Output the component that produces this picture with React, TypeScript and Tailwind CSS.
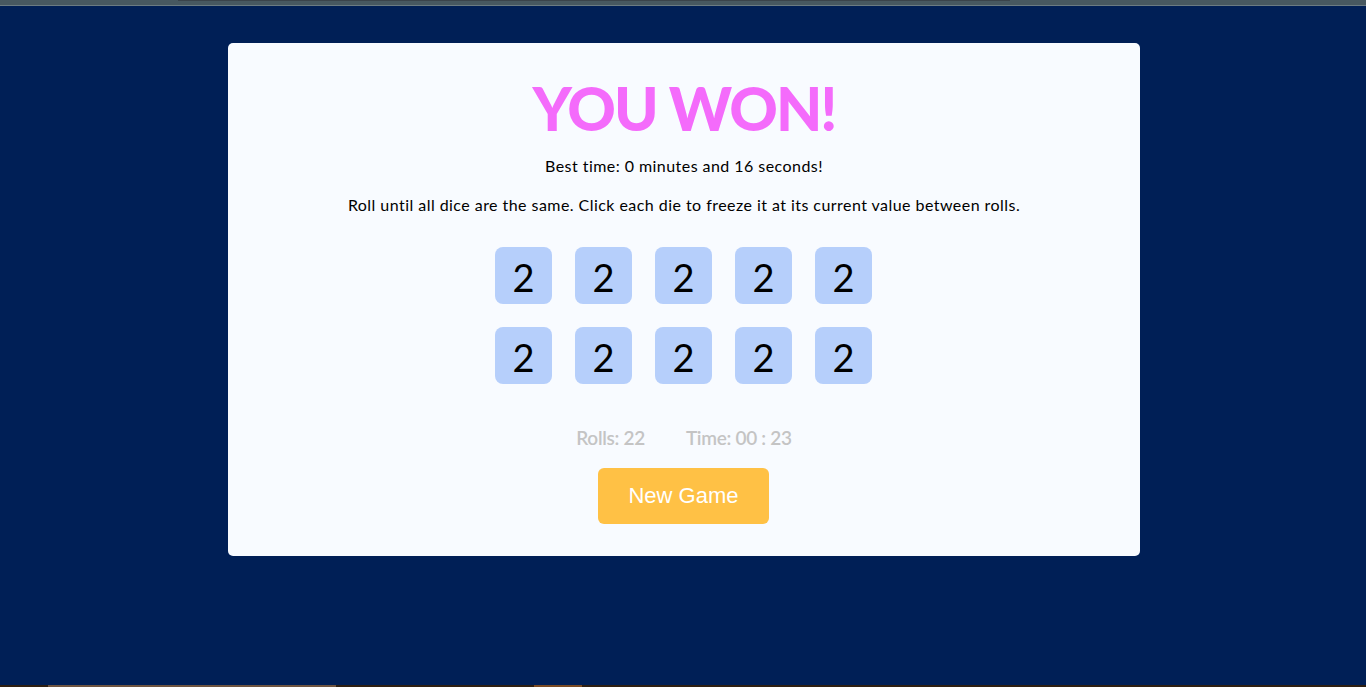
const dice = Array.from({ length: 10 }, (_, i) => ({ id: i, value: 2 }));

export default function App() {
  return (
    <div className="min-h-screen flex flex-col bg-[#001f56]" style={{ fontFamily: 'Lato, "Open Sans", sans-serif' }}>
      {/* browser chrome strip */}
      <div className="h-[6px] bg-[#475860] border-b border-[#6b7b82] flex">
        <div className="ml-[178px] w-[832px] h-[1px] bg-[#3a434a]" />
      </div>

      <main className="flex-1 flex justify-center pt-[37px] pl-[2px]">
        <div className="w-[912px] h-[513px] bg-[#f8fbff] rounded-[5px] flex flex-col items-center">
          <h1 className="mt-[35px] text-[60px] leading-[60px] font-black text-[#f46bfb] tracking-[-2px]">YOU WON!</h1>
          <p className="mt-[17px] text-[16px] leading-[22px] tracking-[0.45px] text-black">
            Best time: 0 minutes and 16 seconds!
          </p>
          <p className="mt-[17px] text-[16px] leading-[22px] tracking-[0.45px] text-black">
            Roll until all dice are the same. Click each die to freeze it at its current value between rolls.
          </p>

          <div className="mt-[31px] mr-[1px] grid grid-cols-5 gap-[23px]">
            {dice.map((d) => (
              <button
                key={d.id}
                className="w-[57px] h-[57px] rounded-[8px] bg-[#b6cffb] flex items-center justify-center text-[38px] text-black pt-[4px]"
              >
                {d.value}
              </button>
            ))}
          </div>

          <div className="mt-[40px] flex gap-[41px] text-[19px] font-semibold text-[#c4c4c4] tracking-[-0.3px]">
            <span>Rolls: 22</span>
            <span>Time: 00 : 23</span>
          </div>

          <button
            className="mt-[15px] mr-[1px] w-[171px] h-[56px] rounded-[6px] bg-[#ffc145] text-white text-[22px]"
            style={{ fontFamily: '"Liberation Sans", Arial, sans-serif' }}
          >
            New Game
          </button>
        </div>
      </main>

      <div className="h-[2px] bg-[#2e1f12] flex">
        <div className="ml-[48px] w-[288px] bg-[#6e5440]" />
        <div className="ml-[198px] w-[48px] bg-[#7a4a22]" />
      </div>
    </div>
  );
}
